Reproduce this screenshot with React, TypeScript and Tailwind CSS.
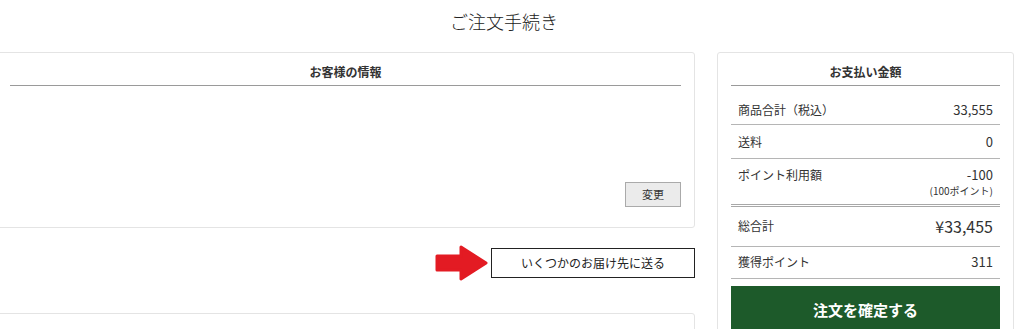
import React from 'react';

const font = { fontFamily: '"Noto Sans CJK JP", "Noto Sans", sans-serif' };

type Row = { label: string; value: string; sub?: string; big?: boolean };

const rows: Row[] = [
  { label: '商品合計（税込）', value: '33,555' },
  { label: '送料', value: '0' },
  { label: 'ポイント利用額', value: '-100', sub: '(100ポイント)' },
  { label: '総合計', value: '¥33,455', big: true },
  { label: '獲得ポイント', value: '311' },
];

// per-row spacing, the totals row is taller and the points row ends in a double rule
const rowClass = [
  'items-start pt-[7px] pb-[5px] border-b border-[#b5b5b5]',
  'items-start pt-[8px] pb-[7px] border-b border-[#b5b5b5]',
  'items-start pt-[7px] pb-[6px] border-b-[3px] border-double border-[#a8a8a8]',
  'items-center pt-[7px] pb-[8px] border-b border-[#b5b5b5]',
  'items-start pt-[6px] pb-[7px] border-b border-[#b5b5b5]',
];

function RedArrow() {
  return (
    <svg width="54" height="36" viewBox="0 0 54 36" className="my-[-3px] shrink-0">
      <path
        d="M2 11 H26 V2 L51 18 L26 34 V25 H2 Z"
        fill="#e31b23"
        stroke="#e31b23"
        strokeWidth="3"
        strokeLinejoin="round"
      />
    </svg>
  );
}

function CardHeader({ title, top = 'pt-[10px]' }: { title: string; top?: string }) {
  return (
    <div
      className={`border-b border-[#9a9a9a] ${top} pb-[4px] text-center text-[12px] font-bold leading-[18px] text-[#333]`}
    >
      {title}
    </div>
  );
}

export default function App() {
  return (
    <div className="h-[329px] w-[1024px] overflow-hidden bg-white text-[#333]" style={font}>
      <h1 className="pt-[8px] pr-[16px] text-center text-[18px] font-light leading-[26px] text-[#222]">
        ご注文手続き
      </h1>

      <div className="mt-[18px] ml-[-4px] flex gap-[22px]">
        {/* left column */}
        <div className="flex w-[699px] shrink-0 flex-col">
          <div className="h-[176px] rounded-[3px] border border-[#e4e4e4] px-[13px]">
            <CardHeader title="お客様の情報" />
            <div className="flex justify-end pt-[96px]">
              <button className="h-[25px] w-[56px] border border-[#aaa] bg-[#ebebeb] text-[11px] leading-none text-[#333]">
                変更
              </button>
            </div>
          </div>

          <div className="mt-[20px] flex h-[30px] items-center justify-end gap-[2px]">
            <RedArrow />
            <button className="h-[30px] w-[204px] border border-[#222] bg-white text-[12px] leading-none text-[#222]">
              いくつかのお届け先に送る
            </button>
          </div>

          <div className="mt-[35px] h-[80px] rounded-[3px] border border-[#e4e4e4] px-[13px]">
            <CardHeader title="お届け先の指定" top="pt-[13px]" />
          </div>
        </div>

        {/* right column */}
        <div className="w-[297px] shrink-0 rounded-[3px] border border-[#e4e4e4] px-[13px]">
          <CardHeader title="お支払い金額" />
          <ul className="mt-[8px]">
            {rows.map((r, i) => (
              <li key={r.label} className={`flex justify-between px-[7px] ${rowClass[i]}`}>
                <span className="text-[12px] leading-[18px]">{r.label}</span>
                <span className="flex flex-col items-end">
                  <span className={r.big ? 'text-[16px] leading-[24px]' : 'text-[13px] leading-[18px]'}>
                    {r.value}
                  </span>
                  {r.sub && <span className="text-[10px] leading-[14px]">{r.sub}</span>}
                </span>
              </li>
            ))}
          </ul>
          <button className="mt-[7px] h-[48px] w-full bg-[#1d5a2a] text-[15px] font-bold text-white">
            注文を確定する
          </button>
        </div>
      </div>
    </div>
  );
}
